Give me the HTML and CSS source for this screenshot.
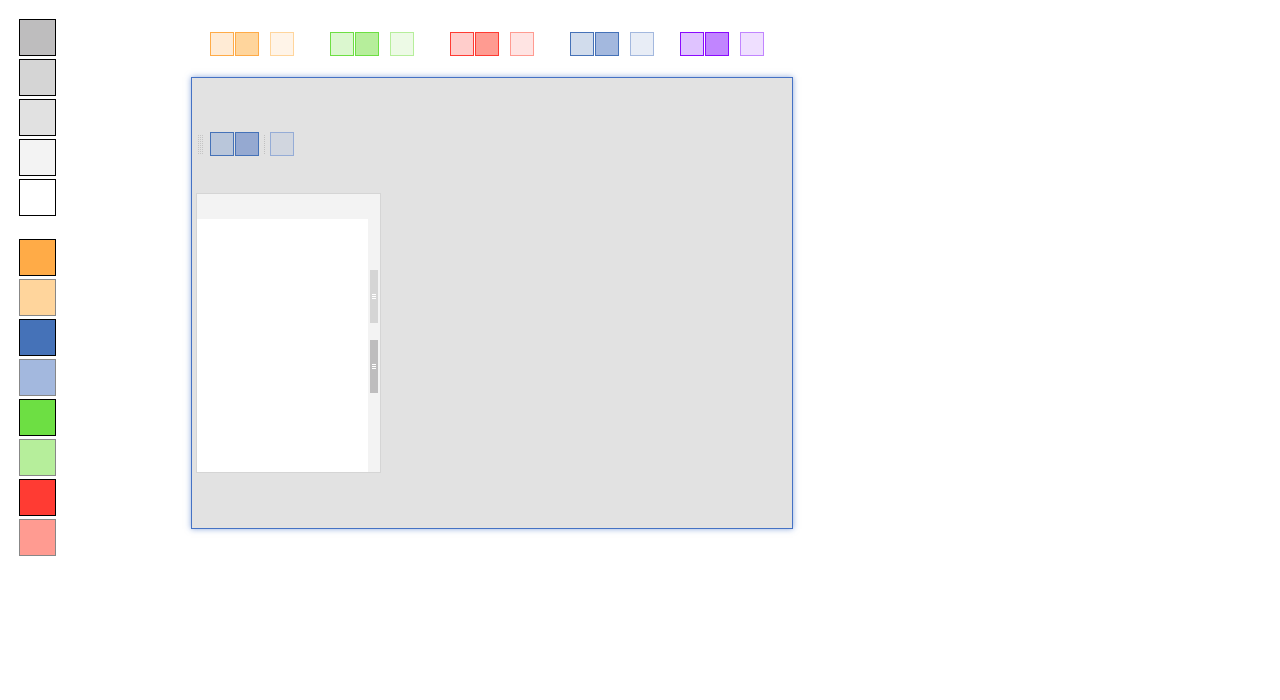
FILE: index.html
```html
<!DOCTYPE html>
<html>
<head>
<meta charset="utf-8">
<link rel="stylesheet" href="styles.css">
</head>
<body>
<div class="page">
  <div class="sidebar">
    <div class="group">
      <div class="sw sw-g1"></div>
      <div class="sw sw-g2"></div>
      <div class="sw sw-g3"></div>
      <div class="sw sw-g4"></div>
      <div class="sw sw-g5"></div>
    </div>
    <div class="group">
      <div class="sw sw-o1"></div>
      <div class="sw sw-o2 light"></div>
      <div class="sw sw-b1"></div>
      <div class="sw sw-b2 light"></div>
      <div class="sw sw-gr1"></div>
      <div class="sw sw-gr2 light"></div>
      <div class="sw sw-r1"></div>
      <div class="sw sw-r2 light"></div>
    </div>
  </div>
  <div class="main">
    <div class="toprow">
      <div class="tgroup orange"><div class="tb a"></div><div class="tb b"></div><div class="tb c"></div></div>
      <div class="tgroup green"><div class="tb a"></div><div class="tb b"></div><div class="tb c"></div></div>
      <div class="tgroup red"><div class="tb a"></div><div class="tb b"></div><div class="tb c"></div></div>
      <div class="tgroup blue"><div class="tb a"></div><div class="tb b"></div><div class="tb c"></div></div>
      <div class="tgroup purple"><div class="tb a"></div><div class="tb b"></div><div class="tb c"></div></div>
    </div>
    <div class="panel">
      <div class="ptoolbar">
        <svg class="grip" width="5" height="19" viewBox="0 0 5 19">
          <defs>
            <pattern id="dots" width="2" height="2" patternUnits="userSpaceOnUse">
              <rect x="0" y="0" width="1" height="1" fill="#c4c4c4"/>
            </pattern>
          </defs>
          <rect x="0" y="0" width="5" height="19" fill="url(#dots)"/>
        </svg>
        <div class="pb pb1"></div>
        <div class="pb pb2"></div>
        <div class="psep"></div>
        <div class="pb pb3"></div>
      </div>
      <div class="inner">
        <div class="inner-head"></div>
        <div class="inner-body">
          <div class="content"></div>
          <div class="scroll">
            <div class="thumb thumb1"><span></span><span></span><span></span></div>
            <div class="thumb thumb2"><span></span><span></span><span></span></div>
          </div>
        </div>
      </div>
    </div>
  </div>
</div>
</body>
</html>
```
FILE: styles.css
```css
html, body {
  margin: 0;
  padding: 0;
  background: #ffffff;
  font-family: "Liberation Sans", Arial, sans-serif;
}

.page {
  display: flex;
  align-items: flex-start;
}

.sidebar {
  padding: 19px 0 0 19px;
  display: flex;
  flex-direction: column;
  gap: 23px;
}

.group {
  display: flex;
  flex-direction: column;
  gap: 3px;
}

.sw {
  width: 35px;
  height: 35px;
  border: 1px solid #000;
}
.sw.light { border-color: #878787; }

.sw-g1 { background: #bebdbe; }
.sw-g2 { background: #d5d5d5; }
.sw-g3 { background: #e1e1e1; }
.sw-g4 { background: #f3f3f3; }
.sw-g5 { background: #ffffff; }
.sw-o1 { background: #ffab47; }
.sw-o2 { background: #ffd59c; }
.sw-b1 { background: #4572b8; }
.sw-b2 { background: #a3b8de; }
.sw-gr1 { background: #6ddf43; }
.sw-gr2 { background: #b6ee9b; }
.sw-r1 { background: #ff3b33; }
.sw-r2 { background: #ff9b91; }

.main {
  margin-left: 135px;
  padding-top: 32px;
}

.toprow {
  display: flex;
  gap: 36px;
  padding-left: 19px;
}

.tgroup {
  display: flex;
  gap: 1px;
}
.tgroup.purple { margin-left: -10px; }

.tb {
  width: 22px;
  height: 22px;
  border: 1px solid;
}
.tb.c { margin-left: 10px; }

.orange .a { background: #ffebd5; border-color: #ffab47; }
.orange .b { background: #ffd59c; border-color: #ffab47; }
.orange .c { background: #fff4e8; border-color: #ffd59c; }

.green .a { background: #dbf7cf; border-color: #6ddf43; }
.green .b { background: #b6ee9b; border-color: #6ddf43; }
.green .c { background: #edfae6; border-color: #b6ee9b; }

.red .a { background: #ffcdcb; border-color: #ff3b33; }
.red .b { background: #ff9b91; border-color: #ff3b33; }
.red .c { background: #ffe4e3; border-color: #ff9b91; }

.blue .a { background: #d1dcec; border-color: #4572b8; }
.blue .b { background: #a3b8de; border-color: #4572b8; }
.blue .c { background: #e8edf6; border-color: #a3b8de; }

.purple .a { background: #dfc3ff; border-color: #8a0aff; }
.purple .b { background: #c185ff; border-color: #8a0aff; }
.purple .c { background: #efdfff; border-color: #c185ff; }

.panel {
  margin-top: 21px;
  width: 600px;
  height: 450px;
  background: #e2e2e2;
  border: 1px solid #4572c4;
  box-shadow: 0 0 6px rgba(69, 114, 196, 0.6);
}

.ptoolbar {
  margin-top: 54px;
  padding-left: 6px;
  display: flex;
  align-items: center;
  height: 24px;
}

.grip {
  display: block;
  margin-right: 7px;
}

.pb {
  width: 22px;
  height: 22px;
  border: 1px solid #4572b8;
}
.pb1 { background: #b9c6da; }
.pb2 { background: #95a9d1; margin-left: 1px; }
.pb3 { background: #d1d6df; border-color: #95acd6; }

.psep {
  width: 0;
  height: 19px;
  border-left: 1px dotted #c0c0c0;
  margin: 0 5px;
}

.inner {
  margin-top: 37px;
  margin-left: 4px;
  width: 183px;
  height: 278px;
  border: 1px solid #d5d5d5;
  background: #f3f3f3;
  display: flex;
  flex-direction: column;
}

.inner-head {
  height: 25px;
  flex: none;
}

.inner-body {
  flex: 1;
  display: flex;
}

.content {
  width: 171px;
  background: #ffffff;
}

.scroll {
  flex: 1;
  background: #f3f3f3;
  padding: 51px 0 0 2px;
  display: flex;
  flex-direction: column;
  gap: 17px;
}

.thumb {
  width: 8px;
  height: 53px;
  display: flex;
  flex-direction: column;
  align-items: center;
  justify-content: center;
  gap: 1px;
}
.thumb span {
  display: block;
  width: 4px;
  height: 1px;
  background: #ffffff;
}
.thumb1 { background: #d5d5d5; }
.thumb2 { background: #bebdbe; }
```
